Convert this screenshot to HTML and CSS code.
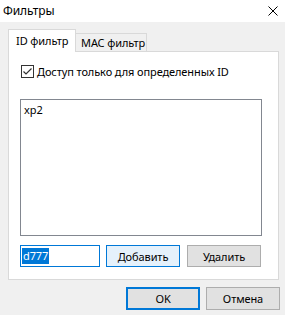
FILE: index.html
```html
<!DOCTYPE html>
<html lang="ru">
  <head>
    <meta charset="UTF-8" />
    <title>Фильтры</title>
    <link rel="stylesheet" href="styles.css">
  </head>
  <body>
    <div class="dialog">
      <div class="titlebar">
        <span class="title">Фильтры</span>
        <svg class="close" width="10" height="10" viewBox="0 0 10 10">
          <path d="M0.5,0.5 L9.5,9.5 M9.5,0.5 L0.5,9.5" stroke="#000" stroke-width="1" fill="none"></path>
        </svg>
      </div>

      <div class="content">
        <div class="tabs">
          <div class="tab tab_active">ID фильтр</div>
          <div class="tab">MAC фильтр</div>
        </div>

        <div class="panel">
          <label class="check_row">
            <svg class="checkbox" width="13" height="13" viewBox="0 0 13 13">
              <rect x="0.5" y="0.5" width="12" height="12" fill="#fff" stroke="#333"></rect>
              <path d="M2.5,6.5 L5,9 L10.5,3.5" stroke="#333" stroke-width="1.2" fill="none"></path>
            </svg>
            <span>Доступ только для определенных ID</span>
          </label>

          <div class="listbox">
            <div class="list_item">xp2</div>
          </div>

          <div class="edit_row">
            <div class="input"><span class="selected">d777</span></div>
            <div class="btn btn_hover">Добавить</div>
            <div class="btn">Удалить</div>
          </div>
        </div>

        <div class="footer">
          <div class="btn btn_default">OK</div>
          <div class="btn">Отмена</div>
        </div>
      </div>
    </div>
  </body>
</html>
```

FILE: styles.css
```css
*,
*:before,
*:after {
  box-sizing: border-box;
}
body {
  margin: 0;
  background: #f0f0f0;
  font: 11px/1 "Noto Sans", sans-serif;
  letter-spacing: -0.1px;
  color: #000;
}
.dialog {
  width: 285px;
  height: 315px;
  display: flex;
  flex-direction: column;
}
.titlebar {
  height: 22px;
  background: #fff;
  display: flex;
  align-items: center;
  justify-content: space-between;
  padding: 0 7px 1px 3px;
}
.title {
  font-size: 12px;
}
.content {
  padding: 7px 0 0 8px;
}

/* вкладки */
.tabs {
  display: flex;
  align-items: flex-end;
  height: 22px;
}
.tab {
  height: 18px;
  width: 71px;
  border: 1px solid #d9d9d9;
  border-left: none;
  border-bottom: none;
  background: #f0f0f0;
  padding-left: 5px;
  white-space: nowrap;
  display: flex;
  align-items: center;
}
.tab_active {
  position: relative;
  z-index: 1;
  height: 23px;
  width: 68px;
  margin-bottom: -1px;
  border-left: 1px solid #d9d9d9;
  background: #fff;
  padding: 0 0 2px 7px;
}
.panel {
  width: 271px;
  height: 229px;
  background: #fff;
  border: 1px solid #d9d9d9;
  padding: 13px 0 0 11px;
  display: flex;
  flex-direction: column;
}
.check_row {
  display: flex;
  align-items: center;
  gap: 3px;
  padding-left: 1px;
  height: 13px;
}
.listbox {
  margin-top: 21px;
  width: 242px;
  height: 137px;
  border: 1px solid #828790;
  padding: 4px 3px;
}
.edit_row {
  display: flex;
  margin-top: 9px;
  gap: 6px;
}
.input {
  width: 80px;
  height: 22px;
  border: 1px solid #0078d7;
  display: flex;
  align-items: center;
  padding-left: 1px;
}
.selected {
  background: #0078d7;
  color: #fff;
  padding: 2px 1px 3px 1px;
}
.btn {
  width: 74px;
  height: 22px;
  background: #e1e1e1;
  border: 1px solid #adadad;
  display: flex;
  align-items: center;
  justify-content: center;
}
.edit_row .btn + .btn {
  margin-left: 1px;
}
.btn_hover {
  background: #e5f1fb;
  border-color: #0078d7;
}
.footer {
  display: flex;
  gap: 6px;
  margin: 7px 0 0 118px;
}
.footer .btn {
  height: 23px;
  width: 74px;
}
.btn_default {
  border: 2px solid #0078d7;
}
```
